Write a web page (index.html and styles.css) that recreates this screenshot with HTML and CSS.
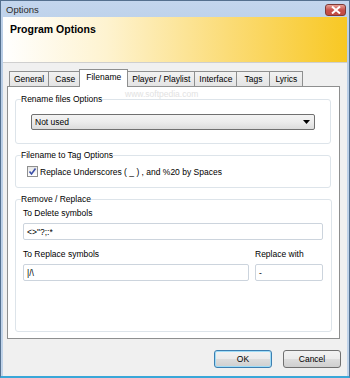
FILE: index.html
```html
<html>
<head>
<meta charset="UTF-8">
<title>Options</title>
<link rel="stylesheet" href="styles.css">
</head>
<body>
<div class="window">
    <div class="titlebar">
        <span class="title">Options</span>
        <span class="close">
            <svg width="10" height="8" viewBox="0 0 10 8"><path d="M1 0.5 L9 7.5 M9 0.5 L1 7.5" stroke="#fff" stroke-width="2"/></svg>
        </span>
    </div>
    <div class="client">
        <div class="header">Program Options</div>

        <div class="tabs">
            <div class="tab">General</div>
            <div class="tab">Case</div>
            <div class="tab active">Filename</div>
            <div class="tab">Player / Playlist</div>
            <div class="tab">Interface</div>
            <div class="tab">Tags</div>
            <div class="tab">Lyrics</div>
        </div>

        <div class="panel">
            <span class="watermark">www.softpedia.com</span>

            <fieldset class="group">
                <legend>Rename files Options</legend>
                <div class="group-rename">
                    <div class="combo">
                        <span>Not used</span>
                        <svg width="7" height="4" viewBox="0 0 7 4"><path d="M0 0 H7 L3.5 4 Z" fill="#000"/></svg>
                    </div>
                </div>
            </fieldset>

            <fieldset class="group">
                <legend>Filename to Tag Options</legend>
                <div class="group-tag">
                    <label class="check">
                        <span class="box">
                            <svg width="9" height="9" viewBox="0 0 9 9"><path d="M1.5 4.5 L3.5 7 L7.5 1.5" stroke="#3b4fa8" stroke-width="1.6" fill="none"/></svg>
                        </span>
                        Replace Underscores ( _ ) , and %20 by Spaces
                    </label>
                </div>
            </fieldset>

            <fieldset class="group group-last">
                <legend>Remove / Replace</legend>
                <div class="group-replace">
                    <div class="field-label">To Delete symbols</div>
                    <div class="textbox">&lt;&gt;"?;:*</div>
                    <div class="row">
                        <div class="col-wide">
                            <div class="field-label">To Replace symbols</div>
                            <div class="textbox">|/\</div>
                        </div>
                        <div class="col-narrow">
                            <div class="field-label">Replace with</div>
                            <div class="textbox">-</div>
                        </div>
                    </div>
                </div>
            </fieldset>
        </div>

        <div class="buttons">
            <button class="btn default">OK</button>
            <button class="btn">Cancel</button>
        </div>
    </div>
</div>
</body>
</html>
```

FILE: styles.css
```css
body {
    margin: 0;
    padding: 0;
    font-family: "Liberation Sans", Arial, sans-serif;
    font-size: 8.5px;
    color: #000;
    background: #fff;
}
.window {
    width: 350px;
    height: 378px;
    box-sizing: border-box;
    background: linear-gradient(#c3d6ee, #b8cde6 40px, #c1d4ea);
    border: 1px solid #54708f;
    border-bottom: 2px solid #3aa7d8;
    display: flex;
    flex-direction: column;
}
.titlebar {
    height: 16px;
    display: flex;
    align-items: center;
    justify-content: space-between;
    padding: 0 3px 0 5px;
}
.title {
    font-size: 9.5px;
    color: #2a2a2a;
}
.close {
    width: 21px;
    height: 12px;
    margin-top: 1px;
    border: 1px solid #7d3a36;
    border-radius: 3px;
    background: linear-gradient(#e8a197, #c7504a 50%, #c24a40);
    display: flex;
    align-items: center;
    justify-content: center;
    box-sizing: border-box;
}
.client {
    flex: 1;
    margin: 0 2px;
    background: #f0f0f0;
    display: flex;
    flex-direction: column;
}
.header {
    height: 46px;
    box-sizing: border-box;
    padding: 6px 7px;
    font-size: 10.5px;
    font-weight: bold;
    background: linear-gradient(90deg, #ffffff 0%, #fef3d0 30%, #fbdc78 65%, #f8c823 100%);
    border-bottom: 1px solid #cfcfcf;
}
.tabs {
    display: flex;
    align-items: flex-end;
    margin: 6px 0 0 6px;
    height: 17px;
    position: relative;
    z-index: 1;
}
.tab {
    height: 14px;
    line-height: 15px;
    min-width: 24px;
    text-align: center;
    padding: 0 4px;
    border: 1px solid #8e8f8f;
    border-bottom: none;
    margin-right: -1px;
    background: linear-gradient(#f2f2f2, #e4e4e4);
}
.tab.active {
    height: 17px;
    line-height: 14px;
    background: #fff;
    margin: 0 -1px -1px -2px;
    padding: 0 6px;
    position: relative;
    z-index: 2;
}
.panel {
    position: relative;
    margin: 0 7px 0 4px;
    height: 253px;
    box-sizing: border-box;
    background: #fff;
    border: 1px solid #8e8f8f;
    padding: 6px 8px 0 7px;
}
.watermark {
    position: absolute;
    left: 117px;
    top: 2px;
    color: #e2e2e2;
    font-size: 8.5px;
}
.group {
    margin: 5px 0 0 0;
    border: 1px solid #dde4ea;
    border-radius: 3px;
    padding: 0 5px;
}
.group:first-of-type {
    margin-top: 0;
}
.group legend {
    padding: 0;
    line-height: 12px;
}
.group-rename {
    padding: 9px 10px 13px 10px;
}
.group-tag {
    padding: 5px 0 10px 6px;
}
.group-last {
    height: 139px;
    box-sizing: border-box;
}
.group-replace {
    padding: 2px 3px 0 2px;
}
.combo {
    height: 16px;
    box-sizing: border-box;
    border: 1px solid #707070;
    border-radius: 2px;
    background: linear-gradient(#f3f3f3, #ececec 50%, #dcdcdc);
    display: flex;
    align-items: center;
    justify-content: space-between;
    padding: 0 4px 0 3px;
}
.check {
    display: flex;
    align-items: center;
    gap: 2px;
}
.box {
    width: 11px;
    height: 11px;
    box-sizing: border-box;
    border: 1px solid #8f8f8f;
    background: linear-gradient(#e6e6e6, #ffffff);
    display: flex;
    align-items: center;
    justify-content: center;
}
.field-label {
    height: 13px;
    line-height: 13px;
    margin-bottom: 3px;
}
.textbox {
    height: 17px;
    line-height: 16px;
    box-sizing: border-box;
    border: 1px solid #ccd4dd;
    border-radius: 2px;
    padding: 0 3px;
    background: #fff;
}
.row {
    display: flex;
    gap: 6px;
    margin-top: 8px;
}
.col-wide {
    width: 226px;
}
.col-narrow {
    width: 68px;
}
.buttons {
    display: flex;
    justify-content: flex-end;
    gap: 11px;
    margin: 11px 6px 0 0;
}
.btn {
    width: 58px;
    height: 18px;
    padding: 0;
    font-family: "Liberation Sans", Arial, sans-serif;
    font-size: 8.5px;
    color: #000;
    border: 1px solid #707070;
    border-radius: 3px;
    background: linear-gradient(#f2f2f2, #ebebeb 50%, #dddddd 51%, #cfcfcf);
}
.btn.default {
    border-color: #3c7fb1;
    box-shadow: inset 0 0 0 1px #9fdcf7;
}
```
